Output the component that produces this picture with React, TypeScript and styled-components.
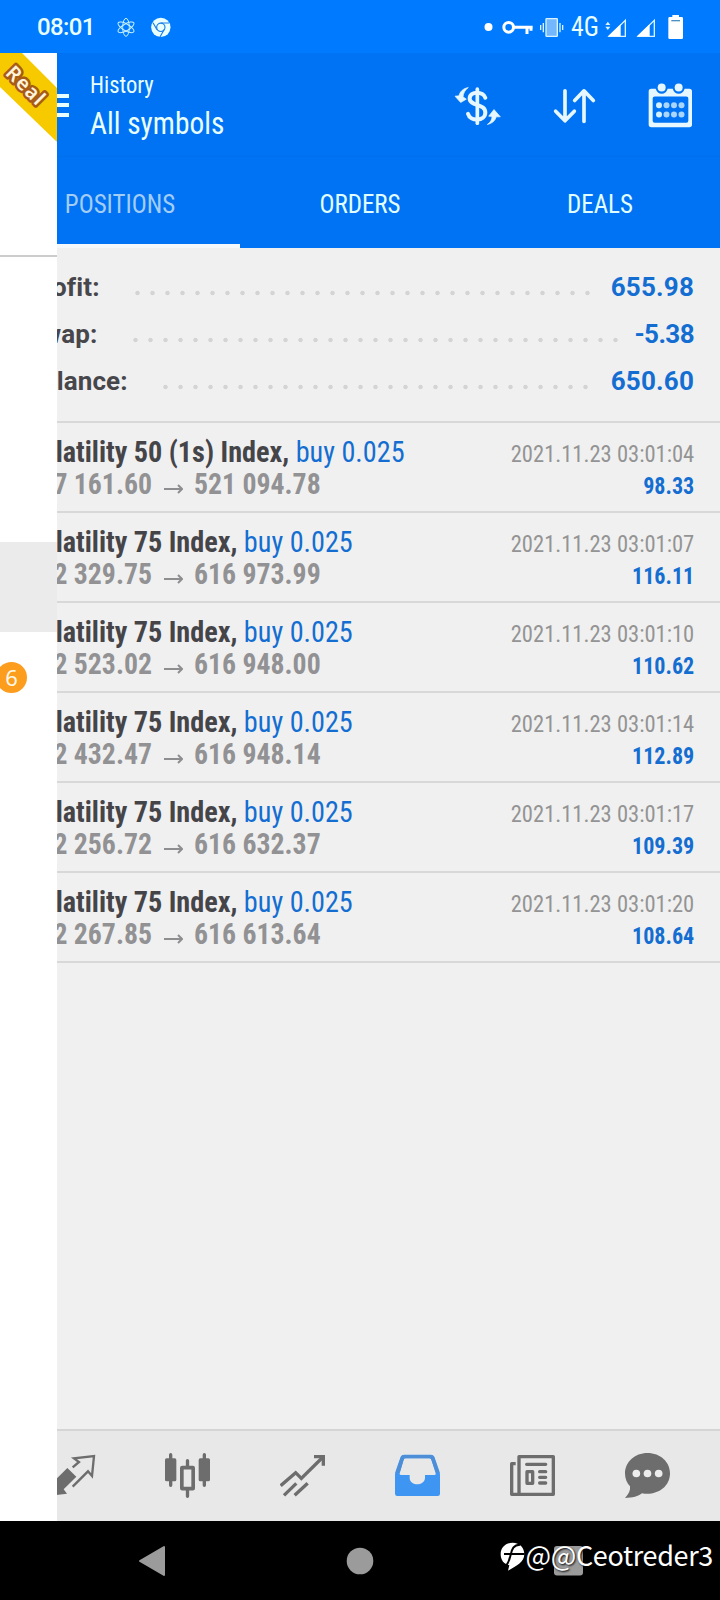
import React from "react";
import styled, { createGlobalStyle } from "styled-components";

const GlobalStyle = createGlobalStyle`
  *, *::before, *::after { box-sizing: border-box; }
  body { margin: 0; background: #f0f0f0; }
`;

const Phone = styled.div`
  position: relative;
  display: flex;
  flex-direction: column;
  width: 720px;
  height: 1600px;
  overflow: hidden;
  background: #f0f0f0;
  font-family: Roboto, "Liberation Sans", sans-serif;
`;

const StatusBar = styled.header`
  display: flex;
  align-items: center;
  height: 53px;
  padding: 0 36px 0 37px;
  background: #007aff;
  color: #e9ffff;
`;

const Clock = styled.span`
  width: 80px;
  font-size: 24px;
  font-weight: 500;
  line-height: 26px;
  letter-spacing: -0.6px;
`;

const Spacer = styled.div`
  flex: 1;
`;

const Glyph = styled.svg<{ $gap?: number }>`
  display: block;
  flex: none;
  margin-left: ${(p) => p.$gap ?? 0}px;
`;

/* Condensed lettering, narrowed a little further towards one edge. */
const Narrow = styled.div<{ $scale: number; $from?: "left" | "right" | "center" }>`
  font-stretch: 75%;
  white-space: nowrap;
  transform: scaleX(${(p) => p.$scale});
  transform-origin: ${(p) => p.$from ?? "left"} center;
`;

const Network = styled(Narrow)`
  width: 28px;
  margin-left: 6px;
  font-size: 27px;
  line-height: 28px;
`;

const Toolbar = styled.div`
  display: flex;
  align-items: center;
  height: 104px;
  padding: 1px 27px 0 26px;
  background: #0073f4;
  border-bottom: 1px solid #006fec;
`;

const MenuButton = styled.div`
  display: flex;
  flex-direction: column;
  gap: 5.5px;
  width: 43px;
  margin-right: 21px;
`;

const MenuLine = styled.span`
  height: 4px;
  background: #e9ffff;
`;

const Titles = styled.div`
  flex: 1;
  align-self: flex-start;
  padding-top: 17px;
  color: #e9ffff;
`;

const Subtitle = styled(Narrow)`
  font-size: 24px;
  line-height: 28px;
`;

const Title = styled(Narrow)`
  margin-top: 6px;
  font-size: 32px;
  line-height: 36px;
`;

const Actions = styled.div`
  display: flex;
  gap: 52px;
`;

const Tabs = styled.nav`
  display: grid;
  grid-template-columns: repeat(3, 1fr);
  height: 91px;
  background: #0073f4;
`;

const Tab = styled.div<{ $active?: boolean }>`
  padding-top: 7px;
  border-bottom: 4px solid ${(p) => (p.$active ? "#f4f8fb" : "transparent")};
  color: ${(p) => (p.$active ? "#a4cdf6" : "#e2ffff")};
  font-size: 26px;
  line-height: 80px;
  text-align: center;
`;

const Summary = styled.section`
  height: 175px;
  padding: 15.5px 26px 0;
  border-bottom: 2px solid #d8d8d8;
`;

const SummaryRow = styled.div`
  display: flex;
  height: 47px;
  line-height: 47px;
  font-size: 26px;
  font-weight: 700;
`;

const SummaryLabel = styled.span<{ $width: number }>`
  width: ${(p) => p.$width}px;
  color: #47474b;
  letter-spacing: 0.1px;
`;

const Dots = styled.span<{ $count: number }>`
  width: ${(p) => p.$count * 15}px;
  background: radial-gradient(circle at 7.5px 29px, #d4d4d4 1.8px, transparent 2.6px) 0 0 / 15px 47px repeat-x;
`;

const SummaryValue = styled.span<{ $tracking: number }>`
  flex: 1;
  color: #146ed2;
  letter-spacing: ${(p) => p.$tracking}px;
  text-align: right;
`;

const List = styled.main`
  flex: 1;
`;

const Position = styled.article`
  display: flex;
  justify-content: space-between;
  height: 90px;
  padding: 12.5px 26px 0 26px;
  border-bottom: 2px solid #d8d8d8;
`;

const Deal = styled.div`
  font-size: 30px;
  line-height: 32px;
`;

const Symbol = styled(Narrow)`
  color: #454549;
  font-weight: 700;
`;

const Side = styled.span`
  color: #146ed2;
  font-weight: 400;
`;

const Prices = styled.div`
  display: flex;
  color: #929294;
  font-weight: 700;
`;

const OpenPrice = styled(Narrow)`
  display: flex;
  justify-content: flex-end;
  width: 126px;
`;

const Arrow = styled.svg`
  margin: 0 11px 0 12px;
`;

const Outcome = styled.div`
  padding-top: 2px;
  font-size: 24px;
  line-height: 32px;
  text-align: right;
`;

const Time = styled(Narrow)`
  color: #949494;
`;

const Profit = styled(Narrow)`
  color: #146ed2;
  font-weight: 700;
`;

const BottomBar = styled.nav`
  display: grid;
  grid-template-columns: repeat(6, 1fr);
  place-items: center;
  height: 92px;
  padding: 0 15px 2px;
  border-top: 2px solid #d5d5d5;
  background: #e8e8e8;
`;

const SystemNav = styled.footer`
  display: grid;
  grid-template-columns: repeat(3, 1fr);
  place-items: center;
  height: 79px;
  padding: 0 48px;
  background: #000;
`;

const Drawer = styled.aside`
  position: absolute;
  top: 53px;
  left: 0;
  width: 57px;
  height: 1468px;
  background: #fff;
  overflow: hidden;
`;

const DrawerAccount = styled.div`
  height: 204px;
  border-bottom: 2px solid #ccc;
`;

const DrawerGroup = styled.div`
  height: 285px;
`;

const DrawerSelected = styled.div`
  height: 90px;
  background: #ebebeb;
`;

const DrawerItem = styled.div`
  display: flex;
  align-items: center;
  height: 91px;
`;

const Badge = styled.span`
  width: 31px;
  height: 31px;
  margin-left: -4px;
  border-radius: 50%;
  background: #fc9d1e;
  color: #fff8e8;
  font-family: "Noto Sans", sans-serif;
  font-size: 22px;
  line-height: 31px;
  text-align: center;
`;

const Watermark = styled.div`
  position: absolute;
  right: 7px;
  bottom: 26px;
  display: flex;
  align-items: center;
  color: #fff;
  font-family: "Noto Sans CJK SC", "Noto Sans", sans-serif;
  font-size: 27px;
  line-height: 38px;
  letter-spacing: -0.35px;
  text-shadow: 1px 1px 2px #000;
`;

const WatermarkLogo = styled(Glyph)`
  margin: 3px 1px 0 0;
`;

const summary = [
  { label: "Profit:", value: "655.98", width: 104, dots: 31, tracking: 0.2 },
  { label: "Swap:", value: "-5.38", width: 102, dots: 33, tracking: -0.6 },
  { label: "Balance:", value: "650.60", width: 132, dots: 29, tracking: 0.2 },
];

const positions = [
  { symbol: "Volatility 50 (1s) Index,", open: "517 161.60", close: "521 094.78", time: "03:01:04", profit: "98.33" },
  { symbol: "Volatility 75 Index,", open: "612 329.75", close: "616 973.99", time: "03:01:07", profit: "116.11" },
  { symbol: "Volatility 75 Index,", open: "612 523.02", close: "616 948.00", time: "03:01:10", profit: "110.62" },
  { symbol: "Volatility 75 Index,", open: "612 432.47", close: "616 948.14", time: "03:01:14", profit: "112.89" },
  { symbol: "Volatility 75 Index,", open: "612 256.72", close: "616 632.37", time: "03:01:17", profit: "109.39" },
  { symbol: "Volatility 75 Index,", open: "612 267.85", close: "616 613.64", time: "03:01:20", profit: "108.64" },
];

const tabs = ["POSITIONS", "ORDERS", "DEALS"];

const StatusIcons = () => (
  <>
    <Glyph width="18" height="26" viewBox="351 39 54 78" fill="none" stroke="#c6f2ff" strokeWidth="3">
      <ellipse cx="378" cy="79" rx="10" ry="27" />
      <ellipse cx="378" cy="79" rx="10" ry="27" transform="rotate(60 378 79)" />
      <ellipse cx="378" cy="79" rx="10" ry="27" transform="rotate(120 378 79)" />
    </Glyph>
    <Glyph $gap={16} width="20" height="26" viewBox="452 39 60 78">
      <circle cx="481.500" cy="79" r="29" fill="#e9ffff" />
      <circle cx="481.500" cy="79" r="12.500" fill="#e9ffff" stroke="#1c7ee8" strokeWidth="3.500" />
      <path d="M481 66H506M470 86L458 65M492 85L479 108" stroke="#1c7ee8" strokeWidth="3.500" />
    </Glyph>
    <Spacer />
    <Glyph width="9" height="26" viewBox="373 39 27 78">
      <circle cx="386.500" cy="78" r="12" fill="#fff" />
    </Glyph>
    <Glyph $gap={9} width="31" height="26" viewBox="427 39 93 78" fill="none" stroke="#fff">
      <circle cx="447" cy="79" r="14.500" strokeWidth="9" />
      <path d="M463 79H519M502 79V99M514 79V89" strokeWidth="9" />
    </Glyph>
    <Glyph $gap={6} width="26" height="26" viewBox="538 39 78 78" fill="none" stroke="#d9f3ff" strokeWidth="4">
      <rect x="559" y="53" width="34" height="53" rx="2" fill="#73b7ff" />
      <path d="M551 66V94M543 72V87M601 66V94M609 72V87" />
    </Glyph>
  </>
);

const SignalIcons = () => (
  <>
    <Glyph $gap={6} width="22" height="26" viewBox="735 39 66 78" fill="#fff">
      <path d="M796 58V106H747Z" fill="none" stroke="#d9f3ff" strokeWidth="4" />
      <path d="M782 70V106H744Z" />
      <path d="M736 72L743.500 62L751 72ZM736 77L743.500 87L751 77Z" fill="#d9f3ff" />
    </Glyph>
    <Glyph $gap={9} width="20" height="26" viewBox="828 39 60 78" fill="#fff">
      <path d="M883 58V106H834Z" fill="none" stroke="#d9f3ff" strokeWidth="4" />
      <path d="M869 70V106H831Z" />
    </Glyph>
    <Glyph $gap={12} width="16" height="28" viewBox="924 36 48 84">
      <path d="M937 42H957V48H965Q969 48 969 52V110Q969 114 965 114H929Q925 114 925 110V52Q925 48 929 48H937Z" fill="#fff" />
      <path d="M934 59H960" stroke="#4e8fc4" strokeWidth="4" />
    </Glyph>
  </>
);

const CurrencyIcon = () => (
  <Glyph width="45" height="45" viewBox="282 247.500 135 135" overflow="visible">
    <g fill="none" stroke="#e6f7ff" strokeLinecap="round" strokeWidth="11">
      <path d="M352 266V368" />
      <path d="M376 292C371 272 329 270 329 294C329 318 376 308 376 336C376 363 330 364 324 340" strokeWidth="12" />
    </g>
    <g fill="#e6f7ff" stroke="#e6f7ff" strokeWidth="2" strokeLinejoin="round">
      <path d="M325 261C309 264 300 273 297 286L285 287L302 306L319 296L309 289C310 278 315 269 325 261Z" />
      <path d="M382 372C391 366 396 358 396 348L386 347L402 327L421 349L409 349C405 361 397 369 382 372Z" />
    </g>
  </Glyph>
);

const SortIcon = () => (
  <Glyph width="45" height="45" viewBox="573 247.500 135 135" fill="none" stroke="#e6f7ff" strokeLinecap="round" strokeLinejoin="round" strokeWidth="11">
    <path d="M615 271V361M587 332L615 361L643 332" />
    <path d="M672 363V271M644 300L672 271L700 300" />
  </Glyph>
);

const CalendarIcon = () => (
  <Glyph width="45" height="45" viewBox="865 247.500 135 135">
    <path
      fillRule="evenodd"
      fill="#e6f7ff"
      d="M875 265H888Q893 280 906 280Q919 280 924 265H939Q944 280 957 280Q970 280 975 265H989Q997 265 997 273V372Q997 380 989 380H875Q867 380 867 372V273Q867 265 875 265ZM885 288Q879 288 879 294V361Q879 367 885 367H980Q986 367 986 361V294Q986 288 980 288Z"
    />
    <circle cx="906" cy="261" r="12" fill="#e6f7ff" />
    <circle cx="957" cy="261" r="12" fill="#e6f7ff" />
    {[898, 920.5, 943, 965.5].map((cx) => (
      <g key={cx} fill={cx === 898 ? "#d4efff" : "#a9d5ff"}>
        <circle cx={cx} cy="314" r="9" />
        <circle cx={cx} cy="342" r="9" />
      </g>
    ))}
  </Glyph>
);

const TradeIcon = () => (
  <Glyph width="45" height="45" viewBox="150 126 135 135" overflow="visible">
    <path d="M202 171L229 197L191 235L201 248L150 254L155 203L168 205Z" fill="#6d6d6d" />
    <path d="M218 169L237 153L222 142L282 135L276 195L264 181L218 227" fill="none" stroke="#6d6d6d" strokeWidth="7" />
  </Glyph>
);

const CandlesIcon = () => (
  <Glyph width="45" height="45" viewBox="495 126 135 135">
    <g stroke="#6d6d6d" strokeLinecap="round" strokeWidth="10">
      <path d="M512 131V223M613 131V223M562.500 149V168M562.500 238V256" />
    </g>
    <rect x="495" y="142" width="34" height="69" rx="5" fill="#6d6d6d" />
    <rect x="596" y="142" width="34" height="69" rx="5" fill="#6d6d6d" />
    <rect x="545.500" y="170" width="34" height="63" rx="1" fill="none" stroke="#6d6d6d" strokeWidth="11" />
  </Glyph>
);

const TrendIcon = () => (
  <Glyph width="45" height="45" viewBox="840 126 135 135" fill="none" stroke="#6d6d6d" strokeWidth="10">
    <path d="M842 224L887 185L904 202L969 138" />
    <path d="M942 137H970V164" />
    <path d="M852 253L889 217M884 253L923 217" />
  </Glyph>
);

const HistoryIcon = () => (
  <Glyph width="45" height="45" viewBox="105 126 135 135">
    <path
      fillRule="evenodd"
      fill="#3f95f2"
      d="M132 131H213Q220 131 223 137L238 180Q240 185 240 192V248Q240 255 233 255H112Q105 255 105 248V192Q105 185 107 180L122 137Q125 131 132 131ZM136 142Q133 142 131 146L119 187Q118 192 123 192H149V202C151 226 192 226 195 202V192H223Q229 192 227 187L214 146Q212 142 208 142Z"
    />
    <path d="M107 185L123 137Q126 132 132 132H213Q219 132 222 137L238 185H228L214 146Q212 142 208 142H136Q133 142 131 146L119 185Z" fill="#4e8ed6" />
  </Glyph>
);

const NewsIcon = () => (
  <Glyph width="45" height="45" viewBox="450 126 135 135" fill="none" stroke="#6d6d6d" strokeWidth="10" strokeLinejoin="round">
    <rect x="477" y="137" width="103" height="113" />
    <path d="M467 158H455V250H479" />
    <path d="M500 160H557M539 182H557M539 199H557M539 216H557" strokeLinecap="round" />
    <rect x="501" y="182" width="17" height="35" />
  </Glyph>
);

const ChatIcon = () => (
  <Glyph width="45" height="45" viewBox="795 126 135 135">
    <path d="M862.500 126C901 126 930 153 930 187C930 231 887 255 846 247C835 256 818 261 795 261C806 250 812 238 810 226C801 216 795 203 795 188C795 153 824 126 862.500 126Z" fill="#6d6d6d" />
    {[829, 862.5, 896].map((cx) => (
      <circle key={cx} cx={cx} cy="187.500" r="11.500" fill="#ececec" />
    ))}
  </Glyph>
);

const Ribbon = () => (
  <Glyph width="57" height="90" viewBox="0 53 57 90">
    <path d="M0 53H22L57 88V142L0 87Z" fill="#f7ca00" />
    <text
      transform="translate(4.500 74) rotate(45)"
      fontFamily="Noto Sans, sans-serif"
      fontSize="20"
      fontWeight="600"
      letterSpacing="1.200"
      fill="#fff3dc"
      stroke="#a85b16"
      strokeWidth="5"
      strokeLinejoin="round"
      paintOrder="stroke"
    >
      Real
    </text>
  </Glyph>
);

export default function App() {
  return (
    <>
      <GlobalStyle />
      <Phone>
        <StatusBar>
          <Clock>08:01</Clock>
          <StatusIcons />
          <Network $scale={0.95}>4G</Network>
          <SignalIcons />
        </StatusBar>
        <Toolbar>
          <MenuButton>
            <MenuLine />
            <MenuLine />
            <MenuLine />
          </MenuButton>
          <Titles>
            <Subtitle $scale={0.94}>History</Subtitle>
            <Title $scale={0.918}>All symbols</Title>
          </Titles>
          <Actions>
            <CurrencyIcon />
            <SortIcon />
            <CalendarIcon />
          </Actions>
        </Toolbar>
        <Tabs>
          {tabs.map((label, i) => (
            <Tab key={label} $active={i === 0}>
              <Narrow $scale={0.96} $from="center">
                {label}
              </Narrow>
            </Tab>
          ))}
        </Tabs>
        <Summary>
          {summary.map((s) => (
            <SummaryRow key={s.label}>
              <SummaryLabel $width={s.width}>{s.label}</SummaryLabel>
              <Dots $count={s.dots} />
              <SummaryValue $tracking={s.tracking}>{s.value}</SummaryValue>
            </SummaryRow>
          ))}
        </Summary>
        <List>
          {positions.map((p) => (
            <Position key={p.time}>
              <Deal>
                <Symbol $scale={0.94}>
                  {p.symbol} <Side>buy 0.025</Side>
                </Symbol>
                <Prices>
                  <OpenPrice $scale={0.925} $from="right">
                    {p.open}
                  </OpenPrice>
                  <Arrow width="19" height="32" viewBox="0 0 19 32" fill="none" stroke="#8e8e90" strokeWidth="2">
                    <path d="M0 21H18M14 17L18 21L14 25" />
                  </Arrow>
                  <Narrow $scale={0.925}>{p.close}</Narrow>
                </Prices>
              </Deal>
              <Outcome>
                <Time $scale={0.94} $from="right">
                  2021.11.23 {p.time}
                </Time>
                <Profit $scale={0.92} $from="right">
                  {p.profit}
                </Profit>
              </Outcome>
            </Position>
          ))}
        </List>
        <BottomBar>
          <TradeIcon />
          <CandlesIcon />
          <TrendIcon />
          <HistoryIcon />
          <NewsIcon />
          <ChatIcon />
        </BottomBar>
        <SystemNav>
          <Glyph width="28" height="32" viewBox="0 0 28 32">
            <path d="M26 2V30L2 16Z" fill="#9b9b9b" stroke="#9b9b9b" strokeWidth="2" strokeLinejoin="round" />
          </Glyph>
          <Glyph width="28" height="28" viewBox="0 0 28 28">
            <circle cx="14" cy="14" r="13.300" fill="#9b9b9b" />
          </Glyph>
          <Glyph width="29" height="30" viewBox="0 0 29 30">
            <rect width="29" height="29.500" rx="3" fill="#9b9b9b" />
          </Glyph>
        </SystemNav>
        <Drawer>
          <DrawerAccount>
            <Ribbon />
          </DrawerAccount>
          <DrawerGroup />
          <DrawerSelected />
          <DrawerItem>
            <Badge>6</Badge>
          </DrawerItem>
        </Drawer>
        <Watermark>
          <WatermarkLogo width="25" height="30" viewBox="418 402 75 90">
            <path d="M456 404C477 404 491 419 491 439C491 462 466 475 442 488L446 472C429 468 420 456 420 438C420 418 435 404 456 404Z" fill="#fff" />
            <path d="M478 410C458 410 454 424 450 440C447 454 442 466 436 474M430 438H492" fill="none" stroke="#000" strokeWidth="6" />
          </WatermarkLogo>
          <span>@@Ceotreder3</span>
        </Watermark>
      </Phone>
    </>
  );
}
